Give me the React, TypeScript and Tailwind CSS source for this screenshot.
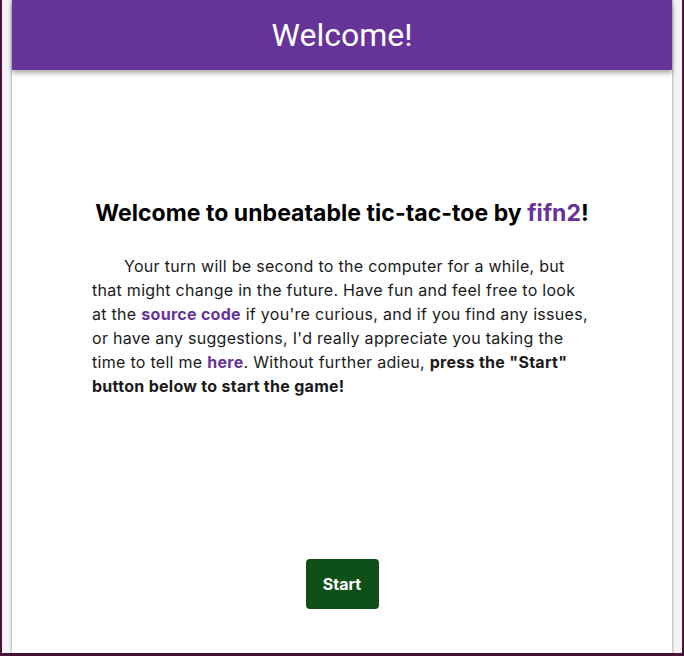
export default function App() {
  return (
    <div className="h-[656px] overflow-hidden bg-[#4b1238] px-[2px] pb-[3px]">
      <div className="h-full bg-[#f4f4f6] px-[10px]">
        <div className="flex h-full flex-col bg-white shadow-[0_0_2px_1px_rgba(0,0,0,0.25)]">
          <header className="flex h-[70px] shrink-0 items-center justify-center bg-[#663399] shadow-[0_3px_5px_rgba(0,0,0,0.35)]">
            <h1 className="font-['Roboto',sans-serif] text-[32px] text-white">Welcome!</h1>
          </header>
          <main className="flex flex-1 flex-col items-center font-['Inter',sans-serif] text-[#1a1a1a]">
            <h2 className="mt-[126px] text-[23px] font-bold tracking-[0.002em] text-black">
              Welcome to unbeatable tic-tac-toe by <span className="text-[#663399]">fifn2</span>!
            </h2>
            <p className="mt-[23px] w-[500px] indent-8 text-[16px] leading-6 tracking-[0.018em]">
              Your turn will be second to the computer for a while, but that might change in the
              future. Have fun and feel free to look at the{' '}
              <a className="font-bold text-[#663399]">source code</a> if you're curious, and if you
              find any issues, or have any suggestions, I'd really appreciate you taking the time to
              tell me <a className="font-bold text-[#663399]">here</a>. Without further adieu,{' '}
              <b>press the "Start" button below to start the game!</b>
            </p>
            <button className="mt-[161px] h-[50px] w-[73px] rounded bg-[#0f4f18] text-[16px] font-bold text-white">
              Start
            </button>
          </main>
        </div>
      </div>
    </div>
  );
}
